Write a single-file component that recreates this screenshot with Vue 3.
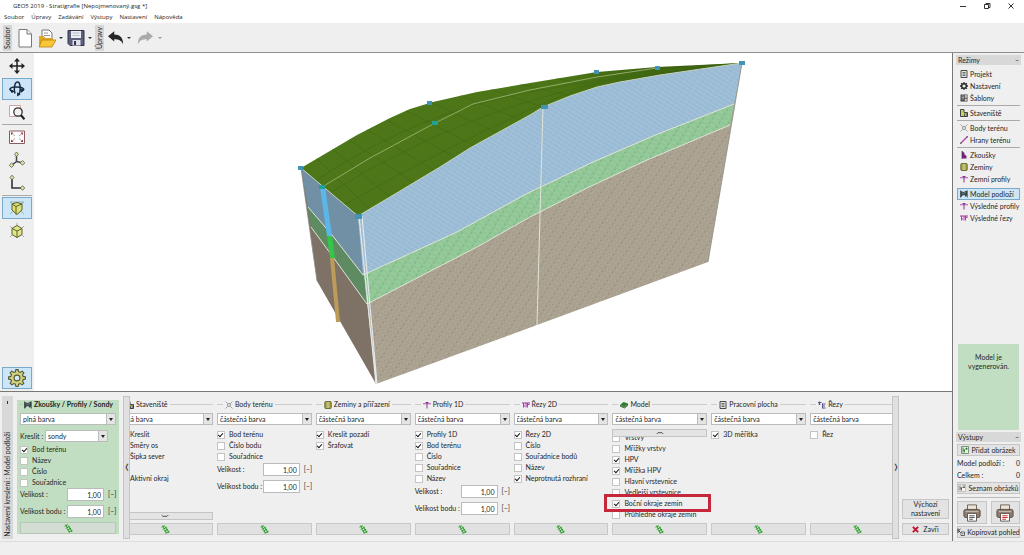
<script setup>
import { reactive, ref } from 'vue'

const menus = ['Soubor', 'Úpravy', 'Zadávání', 'Výstupy', 'Nastavení', 'Nápověda']

const tools = [
  { icon: 'move', label: 'Posun' },
  { icon: 'rotate', label: 'Otáčení', active: true },
  { icon: 'zoom', label: 'Lupa' },
  { icon: 'fit', label: 'Celý pohled', sep: true },
  { icon: 'axo', label: 'Axonometrie' },
  { icon: 'plan', label: 'Půdorys' },
  { icon: 'cubeOpen', label: 'Průhledný model', sep: true, active: true },
  { icon: 'cube', label: 'Plný model' },
]

const modes = [
  { icon: 'doc', label: 'Projekt' },
  { icon: 'cog', label: 'Nastavení' },
  { icon: 'grid', label: 'Šablony' },
  { icon: 'site', label: 'Staveniště', sep: 'line' },
  { icon: 'point', label: 'Body terénu', sep: 'line' },
  { icon: 'edge', label: 'Hrany terénu' },
  { icon: 'test', label: 'Zkoušky', sep: 'line' },
  { icon: 'soil', label: 'Zeminy' },
  { icon: 'profile', label: 'Zemní profily' },
  { icon: 'model', label: 'Model podloží', sep: 'space', active: true },
  { icon: 'profile', label: 'Výsledné profily' },
  { icon: 'cut', label: 'Výsledné řezy' },
]

const sizes = () => [
  { label: 'Velikost :', value: '1,00' },
  { label: 'Velikost bodu :', value: '1,00' },
]

const sondy = reactive({
  color: 'plná barva',
  kind: 'sondy',
  checks: [
    { label: 'Bod terénu', on: true },
    { label: 'Název', on: false },
    { label: 'Číslo', on: false },
    { label: 'Souřadnice', on: false },
  ],
  sizes: sizes(),
})

const columns = reactive([
  {
    title: 'Staveniště', icon: 'site', color: 'plná barva', down: true,
    checks: [
      { label: 'Kreslit', on: true },
      { label: 'Směry os', on: true },
      { label: 'Šipka sever', on: true },
      null,
      { label: 'Aktivní okraj', on: true },
    ],
  },
  {
    title: 'Body terénu', icon: 'point', color: 'částečná barva',
    checks: [
      { label: 'Bod terénu', on: true },
      { label: 'Číslo bodu', on: false },
      { label: 'Souřadnice', on: false },
    ],
    sizes: sizes(),
  },
  {
    title: 'Zeminy a přiřazení', icon: 'soil', color: 'částečná barva',
    checks: [
      { label: 'Kreslit pozadí', on: true },
      { label: 'Šrafovat', on: true },
    ],
  },
  {
    title: 'Profily 1D', icon: 'profile', color: 'částečná barva',
    checks: [
      { label: 'Profily 1D', on: true },
      { label: 'Bod terénu', on: true },
      { label: 'Číslo', on: false },
      { label: 'Souřadnice', on: false },
      { label: 'Název', on: false },
    ],
    sizes: sizes(),
  },
  {
    title: 'Řezy 2D', icon: 'cut', color: 'částečná barva',
    checks: [
      { label: 'Řezy 2D', on: true },
      { label: 'Číslo', on: false },
      { label: 'Souřadnice bodů', on: false },
      { label: 'Název', on: false },
      { label: 'Neprotnutá rozhraní', on: true },
    ],
  },
  {
    title: 'Model', icon: 'block', color: 'částečná barva', up: true,
    checks: [
      { label: 'Vrstvy', on: false },
      { label: 'Mřížky vrstvy', on: false },
      { label: 'HPV', on: true },
      { label: 'Mřížka HPV', on: true },
      { label: 'Hlavní vrstevnice', on: false },
      { label: 'Vedlejší vrstevnice', on: false },
      { label: 'Boční okraje zemin', on: true, marked: true },
      { label: 'Průhledné okraje zemin', on: false },
    ],
  },
  {
    title: 'Pracovní plocha', icon: 'doc', color: 'částečná barva',
    checks: [{ label: '3D měřítka', on: true }],
  },
  {
    title: 'Řezy', icon: 'section', color: 'částečná barva',
    checks: [{ label: 'Řez', on: false }],
  },
])

const colors = ['plná barva', 'částečná barva']
const kinds = ref(['sondy', 'zkoušky', 'profily'])
</script>

<template>
  <div class="window">
    <svg class="defs" aria-hidden="true">
      <symbol id="move" viewBox="0 0 16 16"><path d="M8 1v14M1 8h14" stroke="#222" stroke-width="1.500" /><path d="M8 0l3 3.500H5zM8 16l3-3.500H5zM0 8l3.500-3v6zM16 8l-3.500-3v6z" fill="#222" /></symbol>
      <symbol id="rotate" viewBox="0 0 16 16"><g fill="none" stroke="#142c40" stroke-width="1.500"><path d="M6 12.500C4.500 8 5.500 1 8.500 1s3.500 8 1.500 12.500" /><path d="M4 10.500C-1 9 .5 6 7 6s10 2 6 4.200" /></g><path d="M8 15.500l.2-4.200 3.500 2.200zM11 8l4.500.2L12 12zM1 8l5 2.500L2.500 12z" fill="#142c40" /></symbol>
      <symbol id="zoom" viewBox="0 0 16 16"><path d="M.5 1.500h11v11H.5z" fill="#fff" stroke="#d3a0a0" /><circle cx="9" cy="8" r="4.200" fill="#f2f2f2" stroke="#333" stroke-width="1.300" /><path d="M12 11.300l3.500 4" stroke="#222" stroke-width="2.200" /></symbol>
      <symbol id="fit" viewBox="0 0 16 16"><path d="M.5 2h15v12.500H.5z" fill="#fff" stroke="#8d5a5f" /><path d="M3 4.500l3 2.500M13 4.500L10 7M3 12l3-2.500M13 12l-3-2.500" stroke="#c99" /><path d="M2 3.500h2.500L2 6zM14 3.500h-2.500L14 6zM2 13h2.500L2 10.500zM14 13h-2.500l2.500-2.500z" fill="#7c3b43" /></symbol>
      <symbol id="axo" viewBox="0 0 16 16"><path d="M7.500 3v6.500l6 1.500M7.500 9.500L3 13" fill="none" stroke="#444" stroke-width="1.500" /><g fill="#e6e69a" stroke="#555" stroke-width=".8"><path d="M7.500 0l2 2.300-2 2.200-2-2.200zM13.500 8.500l2.300 2.300-2.300 2.400-2.200-2.400zM2.500 11l2.300 2.200-2.300 2.300L.3 13.200z" /></g></symbol>
      <symbol id="plan" viewBox="0 0 16 16"><path d="M3 3v10h10" fill="none" stroke="#333" stroke-width="1.600" /><g fill="#e6e69a" stroke="#555" stroke-width=".8"><path d="M3 .2l2 2.300-2 2.300-2-2.300zM13.500 10.700l2.200 2.300-2.200 2.300-2.200-2.300z" /></g></symbol>
      <symbol id="cubeOpen" viewBox="0 0 16 16"><path d="M1 2h14M1 2l14 12M15 2L1 14" stroke="#8aa6a0" stroke-width=".8" /><path d="M3 4l5-1.500L13 4v6l-5 4.500L3 10z" fill="#e0e078" stroke="#59602b" /><path d="M3 4l4 2.500v8M7 6.500L13 4" fill="none" stroke="#59602b" /></symbol>
      <symbol id="cube" viewBox="0 0 16 16"><path d="M1 3l3 3M15 3l-3 3M1 14l3-3M15 14l-3-3M8 0v3" stroke="#999" stroke-width=".8" /><path d="M3 5.500L8 2.500l5 3v6l-5 3-5-3z" fill="#e4e68a" stroke="#59602b" /><path d="M3 5.500l5 2.500 5-2.500M8 8v6.500" fill="none" stroke="#59602b" /></symbol>
      <symbol id="gear" viewBox="0 0 16 16"><path d="M7 .5h2l.4 2 1.500.6 1.700-1.200 1.500 1.500-1.200 1.700.6 1.500 2 .4v2l-2 .4-.6 1.500 1.200 1.700-1.500 1.500-1.700-1.200-1.500.6-.4 2H7l-.4-2-1.500-.6-1.700 1.200-1.500-1.500 1.200-1.700-.6-1.500-2-.4V7l2-.4.6-1.500-1.200-1.700 1.500-1.500 1.700 1.200 1.500-.6z" fill="#d3d37c" stroke="#55593a" /><circle cx="8" cy="8" r="2.600" fill="#d5ebfa" stroke="#55593a" /></symbol>
      <symbol id="cog" viewBox="0 0 16 16"><circle cx="8" cy="8" r="4.600" fill="none" stroke="#2e2e2e" stroke-width="3" /><path d="M8 0v4M8 12v4M0 8h4M12 8h4M2.300 2.300l3 3M10.700 10.700l3 3M13.700 2.300l-3 3M5.300 10.700l-3 3" stroke="#2e2e2e" stroke-width="2.600" /></symbol>
      <symbol id="doc" viewBox="0 0 16 16"><path d="M2 1h12v14H2z" fill="#e4e4e4" stroke="#3a3a3a" stroke-width="1.800" /><path d="M5 5h6M5 8h6M5 11h6" stroke="#444" stroke-width="1.500" /></symbol>
      <symbol id="grid" viewBox="0 0 16 16"><path d="M1 1h14v14H1z" fill="#444" /><path d="M3 4h5M3 7h5M3 10h5M10 3h3v4h-3zM10 10h3v3h-3z" stroke="#ddd" stroke-width="1.300" fill="#9a9" /></symbol>
      <symbol id="site" viewBox="0 0 16 16"><path d="M1 1h7v6h7v8H1z" fill="#c9d06a" stroke="#444" stroke-width="2" /><path d="M9 10h5v4H9z" fill="#fff" stroke="#333" stroke-width="1.500" /></symbol>
      <symbol id="point" viewBox="0 0 16 16"><path d="M1 1l4 4M15 1l-4 4M1 15l4-4M15 15l-4-4" stroke="#777" stroke-width="1.300" /><circle cx="8" cy="8" r="3" fill="#fff" stroke="#555" stroke-width="1.300" /></symbol>
      <symbol id="edge" viewBox="0 0 16 16"><path d="M1 15L15 1" stroke="#b040a8" stroke-width="2.500" /><path d="M0 13h3v3H0zM13 0h3v3h-3z" fill="#777" /></symbol>
      <symbol id="test" viewBox="0 0 16 16"><path d="M4 0l5 4v3l4 3v5H4z" fill="#7c1d80" /><path d="M4 0v16" stroke="#444" stroke-width="1.500" /></symbol>
      <symbol id="soil" viewBox="0 0 16 16"><rect x="1.500" y="1" width="13" height="14" rx="2" fill="#9a9a42" stroke="#55551d" stroke-width="1.500" /><path d="M5 4h6M5 8h6M5 12h6" stroke="#f0efb4" stroke-width="1.800" /></symbol>
      <symbol id="profile" viewBox="0 0 16 16"><path d="M0 5.500h16" stroke="#b03fae" stroke-width="1.800" /><path d="M8 3v12M5 3h6" stroke="#7b2480" stroke-width="1.800" /></symbol>
      <symbol id="cut" viewBox="0 0 16 16"><path d="M0 4h16" stroke="#a02ea3" stroke-width="2" /><path d="M3 4v9M3 9h5M8 4v9M11 4v9M11 7h4" stroke="#a02ea3" stroke-width="1.800" fill="none" /><path d="M4 8h6v4H4z" fill="#d98ad9" /></symbol>
      <symbol id="model" viewBox="0 0 16 16"><path d="M2 2l5 2 7-3v10l-3 3-2-4-4 1-3 4z" fill="#3d4a4c" /><path d="M1 1v14M14.500 1v14" stroke="#1c2a2e" stroke-width="1.500" /><path d="M4 7l8-2" stroke="#9ab" /></symbol>
      <symbol id="block" viewBox="0 0 16 16"><path d="M0 8l7-6 9 3-7 6z" fill="#2a7d31" /><path d="M0 8v3l9 4 7-6V5l-7 6z" fill="#205a26" /><path d="M1 10l8 3 6-5" stroke="#b9d58e" fill="none" /></symbol>
      <symbol id="section" viewBox="0 0 16 16"><path d="M0 3h7M3 1v7M1 6h4M9 5v10M9 6h6M9 10h5M9 14h6" stroke="#4c4884" stroke-width="1.800" fill="none" /></symbol>
      <symbol id="app" viewBox="0 0 16 16"><path d="M0 1h16v14H0z" fill="#315438" /><path d="M2 5h12M2 9h12" stroke="#c9d9b4" stroke-width="2" /><path d="M3 12h10" stroke="#6f9e62" stroke-width="2" /></symbol>
      <symbol id="new" viewBox="0 0 16 20"><path d="M2 1.500h8l4.500 4.500v13H2z" fill="#fff" stroke="#777" /><path d="M10 1.500V6h4.500" fill="#eee" stroke="#777" /></symbol>
      <symbol id="open" viewBox="0 0 18 20"><path d="M4 2h7l3 3v9H4z" fill="#fff" stroke="#777" /><path d="M6 5h4M6 7.500h6" stroke="#999" /><path d="M1 8h5l1 2h8v7H1z" fill="#e0a624" /><path d="M4 12h14l-4 7H1z" fill="#f9c637" stroke="#b98411" stroke-width=".8" /></symbol>
      <symbol id="save" viewBox="0 0 18 20"><path d="M1 2.500h16v15H3l-2-2z" fill="#5d5f7c" stroke="#34354a" /><path d="M4 3h10v7H4z" fill="#eceef4" /><path d="M5.500 5h7M5.500 7.500h7" stroke="#b9bbc6" /><path d="M5.500 12h8v5.500h-8z" fill="#dfe1ea" /><path d="M7 13h2v4H7z" fill="#34354a" /></symbol>
      <symbol id="undo" viewBox="0 0 18 16"><path d="M0 6l7-5.500v3.500c6 0 10 3 10 11-2-4-5-5.500-10-5.500V12z" fill="currentColor" /></symbol>
      <symbol id="spark" viewBox="0 0 16 16"><path d="M0 1l10 1 6 12-9-1z" fill="#b7efae" /><path d="M1 4l6-3M3 8l7-4M6 11l6-3M8 14.500l7-3M3 1l3 6M8 3l3 6M6 8l4 7M11 7l3 7" stroke="#2b8a31" stroke-width="1.500" /></symbol>
      <symbol id="printer" viewBox="0 0 20 20"><path d="M5 1h10v6H5z" fill="#eee4d6" stroke="#6a5c4e" /><rect x="1" y="6" width="18" height="9" rx="2" fill="#8c7d70" stroke="#544a42" /><path d="M3 8.500h14" stroke="#d3c8bb" /><path d="M5 10.500h10V19H5z" fill="#fff" stroke="#5a5047" /><path d="M7 13h6M7 15h6M7 17h4" stroke="currentColor" stroke-width="1.200" /></symbol>
      <symbol id="picture" viewBox="0 0 16 16"><path d="M1 1h14v14H1z" fill="#e7f1e4" stroke="#567a56" stroke-width="1.500" /><path d="M4 3v10M4 9l3-2v6M11 3v5M8.500 5.500h5" stroke="#2c6e32" stroke-width="1.700" fill="none" /></symbol>
      <symbol id="list" viewBox="0 0 16 16"><path d="M1 1h14v14H1z" fill="#f4f4f4" stroke="#999" /><path d="M4 3v10M4 9l3-2v6M9 4h5M9 7h5" stroke="#444" stroke-width="1.600" fill="none" /></symbol>
      <symbol id="copy" viewBox="0 0 16 16"><path d="M2 1v9M3 5l4-3M3 5l4 4" stroke="#333" stroke-width="2" fill="none" /><path d="M8 8h7v7H8z" fill="#fff" stroke="#333" stroke-width="1.500" /><path d="M10 11.500h3" stroke="#333" stroke-width="1.500" /></symbol>
      <symbol id="cross" viewBox="0 0 16 16"><path d="M2 2l12 12M14 2L2 14" stroke="#c3142d" stroke-width="4.500" /></symbol>
      <symbol id="up" viewBox="0 0 12 4"><path d="M1 3.500L3 1.500h6l2 2" fill="none" stroke="#333" stroke-width="1.200" /></symbol>
      <symbol id="down" viewBox="0 0 12 4"><path d="M1 .5L3 2.500h6l2-2" fill="none" stroke="#333" stroke-width="1.200" /></symbol>
    </svg>

    <header class="titlebar">
      <svg class="app-icon"><use href="#app" /></svg>
      <h1>GEO5 2019 - Stratigrafie [Nepojmenovaný.gsg *]</h1>
      <div class="caption">
        <button aria-label="Minimalizovat"><svg viewBox="0 0 8 8"><path d="M1 4.500h6" /></svg></button>
        <button aria-label="Obnovit"><svg viewBox="0 0 8 8"><path d="M1.500 2.500h4v4h-4zM3 2.500v-1h4v4H5.500" /></svg></button>
        <button aria-label="Zavřít"><svg viewBox="0 0 8 8"><path d="M1.500 1.500l5 5M6.500 1.500l-5 5" /></svg></button>
      </div>
    </header>
    <nav class="menubar">
      <button v-for="m in menus" :key="m">{{ m }}</button>
    </nav>
    <div class="toolbar">
      <span class="grip">Soubor</span>
      <button class="tb" aria-label="Nový"><svg><use href="#new" /></svg></button>
      <button class="tb" aria-label="Otevřít"><svg><use href="#open" /></svg></button>
      <button class="drop" aria-label="Naposledy otevřené"></button>
      <button class="tb" aria-label="Uložit"><svg><use href="#save" /></svg></button>
      <button class="drop" aria-label="Možnosti uložení"></button>
      <span class="grip">Úpravy</span>
      <button class="tb arrow" aria-label="Zpět"><svg><use href="#undo" /></svg></button>
      <button class="drop" aria-label="Historie zpět"></button>
      <button class="tb arrow redo" aria-label="Znovu"><svg><use href="#undo" /></svg></button>
      <button class="drop off" aria-label="Historie znovu"></button>
    </div>

    <div class="workspace">
      <div class="left">
        <div class="stage">
          <div class="tools">
            <template v-for="t in tools" :key="t.icon">
              <hr v-if="t.sep" />
              <button :class="{ active: t.active }" :aria-label="t.label"><svg><use :href="'#' + t.icon" /></svg></button>
            </template>
            <button class="active last" aria-label="Nastavení kreslení"><svg><use href="#gear" /></svg></button>
          </div>
          <div class="canvas">
            <svg viewBox="34 53 918 338" role="img" aria-label="3D model podloží">
              <defs>
                <pattern id="pBlue" width="6" height="4" patternUnits="userSpaceOnUse" patternTransform="rotate(32)"><rect width="6" height="4" fill="#a0bfd8" /><path d="M0 1h5" stroke="#8dafca" stroke-width=".8" /></pattern>
                <pattern id="pGreen" width="8" height="5" patternUnits="userSpaceOnUse" patternTransform="rotate(32)"><rect width="8" height="5" fill="#95ca9a" /><path d="M0 1h8" stroke="#86bc8d" stroke-width=".7" /><path d="M2 3h2" stroke="#6fa97a" /></pattern>
                <pattern id="pBrown" width="9" height="5" patternUnits="userSpaceOnUse" patternTransform="rotate(34)"><rect width="9" height="5" fill="#aea594" /><path d="M0 1h9" stroke="#a19887" stroke-width=".8" /><path d="M2 3.200h2" stroke="#8e8375" /><path d="M7 3.500h1" stroke="#998f80" /></pattern>
                <linearGradient id="gTop" x1="0" x2="1"><stop offset="0" stop-color="#4d7719" /><stop offset=".6" stop-color="#4b7516" /><stop offset="1" stop-color="#34510e" /></linearGradient>
                <clipPath id="cTop"><path d="M301 168L357 135 390 118 410 109 433 102 477 92 530 83 597 72 657 67 742 63 660 75 620 82 597 87 570 96 543 107 530 115 470 148 440 167 390 197 358 216z" /></clipPath>
              </defs>
              <path d="M301 168L358 216 376 384 317 281z" fill="#7d7265" />
              <path d="M301 168L358 216 367 303 333 257 311 227z" fill="#5f8b62" />
              <path d="M301 168L358 216 363 275 332 235 308 207z" fill="#7190a6" />
              <path d="M358 216L390 197 440 167 470 148 530 115 543 107 570 96 597 87 620 82 660 75 742 63 708 262 537 325 376 384z" fill="url(#pBrown)" />
              <path d="M358 216L390 197 440 167 470 148 530 115 543 107 570 96 597 87 620 82 660 75 742 63 730 125 647 160 587 188 530 217 477 247 417 278 367 304z" fill="url(#pGreen)" />
              <path d="M358 216L390 197 440 167 470 148 530 115 543 107 570 96 597 87 620 82 660 75 742 63 734 104 653 136 593 162 526 194 457 232 363 275z" fill="url(#pBlue)" />
              <g clip-path="url(#cTop)">
                <path d="M290 50h460v170H290z" fill="url(#gTop)" />
                <path d="M315 157l55 52M331 148l60 50M348 139l66 44M366 129l68 41M385 119l70 38M405 110l70 36M430 102l70 32M460 95l65 27M490 89l58 20M520 84l60 14M555 78l55 12M590 73l60 8M315 181Q420 110 540 90T742 63M330 193Q430 130 540 98T742 63M344 205Q450 145 540 105T700 69" fill="none" stroke="#426b12" stroke-width=".7" />
                <path d="M322 187L370 158 435 123 473 104 530 90 597 77 657 68" fill="none" stroke="#a3bb80" stroke-width=".8" />
              </g>
              <g fill="none" stroke="#dfe5d6" stroke-width="1">
                <path d="M301 168L358 216 390 197 440 167 470 148 530 115 543 107 570 96 597 87 620 82 660 75 742 63" stroke="#c3d2bd" />
                <path d="M308 207L332 235 363 275 457 232 526 194 593 162 653 136 734 104" />
                <path d="M311 227L333 257 367 304 417 278 477 247 530 217 587 188 647 160 730 125" />
                <path d="M543 107L537 325" />
              </g>
              <path d="M742 63L708 262M301 168l16 113" stroke="#8b8d89" stroke-width=".8" />
              <path d="M320 187h5l7 49h-5z" fill="#5bb7ea" />
              <path d="M327 236h5l3 22h-5z" fill="#36c449" />
              <path d="M330 258h4l6 64h-4z" fill="#bd9b58" />
              <path d="M359 216l17 168M362 216l15 168" stroke="#e3e7e9" stroke-width="1.200" />
              <g fill="#4393b4">
                <path d="M298 166h5v4h-5zM355 214h7v5h-7zM541 105h7v4h-7zM427 101h5v4h-5zM594 70h5v4h-5zM655 66h5v4h-5zM739 61h6v4h-6z" />
                <path d="M319 185h6v4h-6zM432 121h6v4h-6z" fill="#24a195" />
              </g>
            </svg>
          </div>
        </div>

        <section class="settings">
          <div class="side-tab"><span class="mark"></span><span class="vertical">Nastavení kreslení : Model podloží</span></div>
          <fieldset class="sondy">
            <legend><svg><use href="#model" /></svg><span>Zkoušky / Profily / Sondy</span></legend>
            <span class="select"><select v-model="sondy.color" aria-label="Barva sond"><option v-for="c in colors" :key="c">{{ c }}</option></select></span>
            <div class="kind">
              <label for="kind">Kreslit :</label>
              <span class="select"><select id="kind" v-model="sondy.kind"><option v-for="k in kinds" :key="k">{{ k }}</option></select></span>
            </div>
            <label v-for="c in sondy.checks" :key="c.label" class="check"><input v-model="c.on" type="checkbox" />{{ c.label }}</label>
            <label v-for="s in sondy.sizes" :key="s.label" class="size"><span>{{ s.label }}</span><input v-model="s.value" type="text" /><i>[–]</i></label>
            <button class="apply" aria-label="Použít pro sondy"><svg><use href="#spark" /></svg></button>
          </fieldset>
          <button class="scroll" aria-label="Posunout vlevo">❬</button>
          <div class="viewport">
            <div class="columns">
              <fieldset v-for="col in columns" :key="col.title" class="column">
                <legend><svg><use :href="'#' + col.icon" /></svg><span>{{ col.title }}</span></legend>
                <span class="select"><select v-model="col.color" :aria-label="'Barva – ' + col.title"><option v-for="c in colors" :key="c">{{ c }}</option></select></span>
                <div class="list" :class="{ bottom: col.up }">
                  <template v-for="(c, i) in col.checks" :key="i">
                    <label v-if="c" class="check" :class="{ marked: c.marked }"><input v-model="c.on" type="checkbox" />{{ c.label }}</label>
                    <div v-else class="check"></div>
                  </template>
                  <label v-for="s in col.sizes" :key="s.label" class="size"><span>{{ s.label }}</span><input v-model="s.value" type="text" /><i>[–]</i></label>
                  <button v-if="col.up" class="more top" aria-label="Nahoru"><svg><use href="#up" /></svg></button>
                  <button v-if="col.down" class="more end" aria-label="Dolů"><svg><use href="#down" /></svg></button>
                </div>
                <button class="apply" :aria-label="'Použít – ' + col.title"><svg><use href="#spark" /></svg></button>
              </fieldset>
            </div>
          </div>
          <button class="scroll" aria-label="Posunout vpravo">❭</button>
          <div class="actions">
            <button class="tall">Výchozí nastavení</button>
            <button><svg><use href="#cross" /></svg>Zavři</button>
          </div>
        </section>
      </div>

      <aside class="right">
        <h2>Režimy <button aria-label="Sbalit režimy">–</button></h2>
        <nav class="modes">
          <template v-for="m in modes" :key="m.label">
            <hr v-if="m.sep" :class="m.sep" />
            <button :class="{ active: m.active }"><svg><use :href="'#' + m.icon" /></svg>{{ m.label }}</button>
          </template>
        </nav>
        <p class="status">Model je<br />vygenerován.</p>
        <h2>Výstupy <button aria-label="Sbalit výstupy">–</button></h2>
        <div class="outputs">
          <button><svg><use href="#picture" /></svg>Přidat obrázek</button>
          <p><span>Model podloží :</span><span>0</span></p>
          <p><span>Celkem :</span><span>0</span></p>
          <button><svg><use href="#list" /></svg>Seznam obrázků</button>
          <hr />
          <div class="printers">
            <button aria-label="Tisk"><svg><use href="#printer" /></svg></button>
            <button class="red" aria-label="Tisk pohledu"><svg><use href="#printer" /></svg></button>
          </div>
          <button><svg><use href="#copy" /></svg>Kopírovat pohled</button>
        </div>
      </aside>
    </div>
    <footer class="statusbar"></footer>
  </div>
</template>

<style>
body {
  margin: 0;
  background: #efefef;
}
</style>

<style scoped>
.window {
  display: flex;
  flex-direction: column;
  min-height: 100vh;
  background: #efefef;
  color: #262626;
  font: 7px/9px Lato, "Open Sans", sans-serif;
}
.window * { box-sizing: border-box; }
.defs { position: absolute; width: 0; height: 0; }
button, input, select { font: inherit; color: inherit; margin: 0; padding: 0; border: 0; background: none; }
h1, h2, p { margin: 0; font: inherit; }
hr { margin: 0; border: 0; }
svg { display: block; flex: none; }

.titlebar, .menubar { font: 6px/11px "Open Sans", Lato, sans-serif; }
.titlebar { display: flex; align-items: center; height: 12px; padding-left: 1px; background: #fff; }
.app-icon { width: 9px; height: 9px; margin-right: 3px; }
.caption { display: flex; gap: 16px; margin-left: auto; padding-right: 9px; }
.caption svg { width: 8px; height: 8px; fill: none; stroke: #333; stroke-width: 1; }
.menubar { display: flex; gap: 7px; height: 11px; padding: 0 4px; background: #fff; }

.toolbar { display: flex; align-items: center; height: 30px; padding: 0 3px; border-bottom: 1px solid #8f8f8f; }
.grip { width: 9px; height: 26px; background: #d6d6d6; writing-mode: vertical-rl; transform: rotate(180deg); text-align: center; line-height: 9px; }
.tb { width: 18px; margin-left: 4px; }
.tb svg { width: 18px; height: 20px; }
.drop { width: 0; height: 0; margin: 0 2px 0 3px; border: 2px solid transparent; border-top-color: #333; border-bottom: 0; }
.drop + .tb { margin-left: 2px; }
.drop + .grip { margin-left: 1px; }
.arrow { width: 16px; }
.arrow svg { width: 16px; height: 16px; }
.drop + .redo { color: #aaa; margin-left: 4px; }
.redo svg { transform: scaleX(-1); }
.redo + .off { border-top-color: #999; margin-left: 5px; }

.workspace { display: flex; flex: 1; }
.left { display: flex; flex: 1; flex-direction: column; min-width: 0; border-right: 1px solid #777; }
.stage { display: flex; flex: 1; min-height: 0; border-bottom: 1px solid #777; }
.tools { display: flex; flex-direction: column; gap: 1px; width: 34px; padding: 2px; }
.tools button { display: flex; align-items: center; justify-content: center; height: 22px; border: 1px solid transparent; }
.tools svg { width: 16px; height: 16px; }
.tools button.active { background: #cce6f8; border-color: #79a9cb; }
.tools .last { margin-top: auto; }
.tools .last svg { width: 18px; height: 18px; }
.tools hr { height: 1px; background: #aaa; }
.canvas { position: relative; flex: 1; background: #fff; }
.canvas svg { position: absolute; inset: 0; width: 100%; height: 100%; }

.settings { display: flex; padding: 4px 3px 2px 2px; }
.side-tab { display: flex; flex-direction: column; justify-content: space-between; align-items: center; width: 11px; margin-right: 4px; padding: 5px 0 2px; background: #d8d8d8; }
.mark { width: 1px; height: 3px; background: #333; }
.vertical { writing-mode: vertical-rl; transform: rotate(180deg); white-space: nowrap; }
fieldset { display: flex; flex-direction: column; min-width: 0; margin: 0; padding: 0; border: 0; }
legend { float: left; display: flex; align-items: center; width: 100%; height: 9px; padding: 0; gap: 2px; white-space: nowrap; }
legend::before, legend::after { content: ""; width: 6px; height: 1px; background: #ccc; }
legend::after { flex: 1; }
legend svg { width: 8px; height: 8px; }
.sondy { width: 102px; margin: 4px 4px 5px 0; padding: 0 3px; background: #c1dec2; }
.sondy legend { font-weight: bold; }
.sondy legend::before { width: 2px; background: #a9cbaa; }
.sondy legend::after { background: #a9cbaa; }
.select { position: relative; display: block; height: 12px; margin-top: 4px; }
.select select { display: block; width: 100%; height: 12px; padding: 0 2px; appearance: none; background: #fff; border: 1px solid #bbb; line-height: 10px; }
.select::after { content: ""; position: absolute; right: 3px; top: 5px; border: 2px solid transparent; border-top: 3px solid #222; border-bottom: 0; pointer-events: none; }
.select::before { content: ""; position: absolute; right: 1px; top: 1px; width: 8px; height: 10px; background: #e4e4e4; border-left: 1px solid #bbb; pointer-events: none; }
.kind { display: flex; align-items: center; gap: 2px; margin: 5px 0 2px; padding-right: 8px; }
.kind label { width: 23px; white-space: nowrap; }
.kind .select { flex: 1; margin: 0; }
.check { display: flex; align-items: center; gap: 4px; height: 11px; flex: none; white-space: nowrap; }
.check input { display: flex; justify-content: center; width: 8px; height: 8px; appearance: none; background: #fff; border: 1px solid #c4c4c4; }
.check input:checked::after { content: ""; width: 2px; height: 4px; border: solid #111; border-width: 0 1px 1px 0; transform: rotate(42deg); }
.size { display: flex; align-items: center; height: 13px; margin-bottom: 4px; flex: none; white-space: nowrap; }
.size span { flex: 1; }
.size input { width: 37px; height: 13px; padding: 0 2px; background: #fff; border: 1px solid #bbb; text-align: right; }
.size i { width: 12px; padding-left: 4px; font-style: normal; }
.apply { display: flex; align-items: center; justify-content: center; height: 12px; margin-top: auto; background: #e1e1e1; border: 1px solid #c8c8c8; }
.apply svg { width: 9px; height: 9px; }
.sondy .apply { background: #d3ddd3; border-color: #b2c9b3; }
.scroll { width: 7px; background: #e0e0e0; border: 1px solid #c4c4c4; text-align: center; font: 7px/9px "DejaVu Sans", sans-serif; }
.viewport { flex: 1; min-width: 0; overflow: hidden; }
.columns { display: grid; grid-template-columns: repeat(8, minmax(0, 1fr)); gap: 4px; margin: 4px -13px 0 -12px; }
.list { position: relative; display: flex; flex-direction: column; height: 91px; margin: 4px 0 3px; }
.list.bottom { justify-content: flex-end; overflow: clip; overflow-clip-margin: 8px; }
.list .check + .size { margin-top: 1px; }
.more { position: absolute; left: 0; right: 0; display: flex; align-items: center; justify-content: center; height: 8px; background: #e4e4e4; border: 1px solid #c4c4c4; }
.more svg { width: 8px; height: 4px; }
.top { top: 0; }
.end { bottom: 0; }
.marked { position: relative; }
.marked::after { content: ""; position: absolute; inset: -4px -4px -3px -8px; border: 3px solid #c4283a; }
.actions { display: flex; flex-direction: column; justify-content: flex-end; gap: 4px; width: 50px; padding: 0 0 4px 3px; }
.actions button, .outputs button { display: flex; align-items: center; justify-content: center; gap: 2px; height: 12px; background: #e3e3e3; border: 1px solid #c6c6c6; white-space: nowrap; }
.actions .tall { height: 20px; white-space: normal; }
.actions svg { width: 7px; height: 7px; margin-right: 2px; }

.right { display: flex; flex-direction: column; width: 71px; padding: 2px 3px 3px 3px; }
h2 { display: flex; justify-content: space-between; height: 10px; padding: 0 2px; background: #d8d8d8; line-height: 10px; }
.modes { display: flex; flex-direction: column; padding: 3px 1px 2px; }
.modes button { display: flex; align-items: center; gap: 2px; height: 12px; padding: 0 2px; border: 1px solid transparent; white-space: nowrap; }
.modes svg { width: 8px; height: 8px; }
.modes .active { background: #cce6f8; border-color: #79a9cb; }
.modes hr { height: 1px; margin: 1px 0; }
.modes hr.line { background: #aaa; }
.status { height: 86px; margin: auto 2px 2px; padding-top: 9px; background: #c1dec2; text-align: center; }
.outputs { display: flex; flex-direction: column; gap: 2px; padding: 2px 1px 0; }
.outputs p { display: flex; justify-content: space-between; height: 10px; line-height: 10px; }
.outputs svg { width: 8px; height: 8px; }
.outputs hr { height: 1px; margin: 1px 0; background: #bbb; }
.printers { display: flex; gap: 4px; }
.outputs .printers button { flex: 1; height: 23px; }
.outputs .printers svg { width: 18px; height: 18px; color: #555; }
.outputs .printers .red svg { color: #c33; }
.statusbar { height: 14px; border-top: 1px solid #ddd; }
</style>
